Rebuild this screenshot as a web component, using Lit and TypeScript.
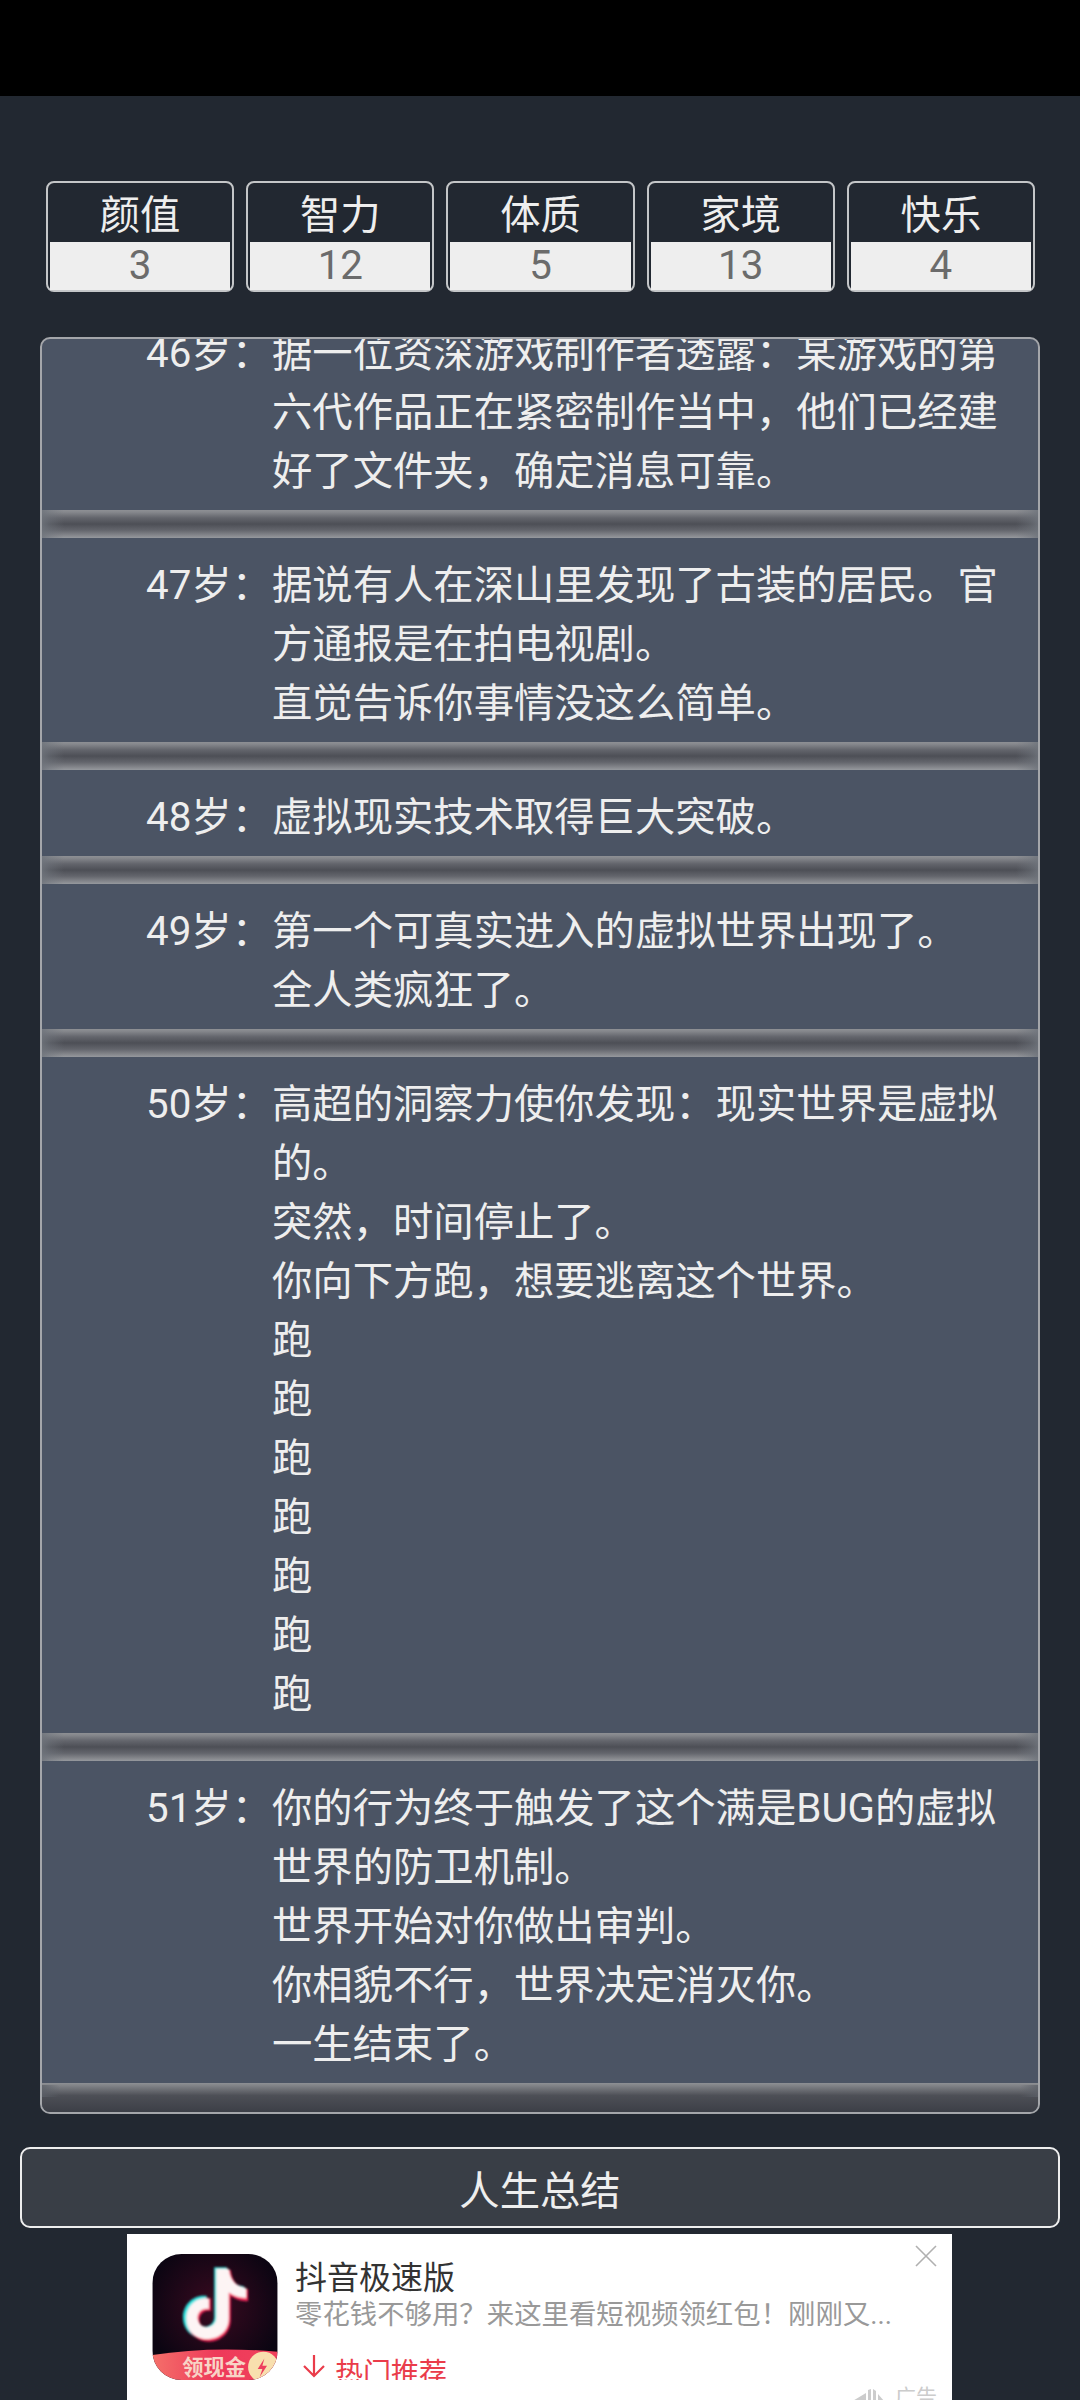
import { LitElement, html, css, svg } from 'lit';
import { customElement } from 'lit/decorators.js';

const stats = [
  ['颜值', '3'],
  ['智力', '12'],
  ['体质', '5'],
  ['家境', '13'],
  ['快乐', '4'],
];

const rows: [number, string[]][] = [
  [46, ['据一位资深游戏制作者透露：某游戏的第六代作品正在紧密制作当中，他们已经建好了文件夹，确定消息可靠。']],
  [47, ['据说有人在深山里发现了古装的居民。官方通报是在拍电视剧。', '直觉告诉你事情没这么简单。']],
  [48, ['虚拟现实技术取得巨大突破。']],
  [49, ['第一个可真实进入的虚拟世界出现了。', '全人类疯狂了。']],
  [50, ['高超的洞察力使你发现：现实世界是虚拟的。', '突然，时间停止了。', '你向下方跑，想要逃离这个世界。', '跑', '跑', '跑', '跑', '跑', '跑', '跑']],
  [51, ['你的行为终于触发了这个满是BUG的虚拟世界的防卫机制。', '世界开始对你做出审判。', '你相貌不行，世界决定消灭你。', '一生结束了。']],
];

const appIcon = svg`
  <svg class="app-icon" viewBox="66 42 377 379">
    <defs>
      <radialGradient id="glow" cx="50%" cy="42%" r="55%">
        <stop offset="0" stop-color="#3a0a20" />
        <stop offset="1" stop-color="#0b0512" />
      </radialGradient>
      <linearGradient id="band" x1="0" x2="1" y1="0" y2="0">
        <stop offset="0" stop-color="#f4706a" />
        <stop offset="0.5" stop-color="#ee3a5a" />
        <stop offset="1" stop-color="#f0405c" />
      </linearGradient>
      <clipPath id="rounded"><rect x="66" y="42" width="377" height="379" rx="88" /></clipPath>
      <filter id="soft"><feGaussianBlur stdDeviation="2.5" /></filter>
    </defs>
    <g clip-path="url(#rounded)">
      <rect x="66" y="42" width="377" height="379" fill="url(#glow)" />
      <g filter="url(#soft)">
        <path d="M252 82h38c3 36 24 54 52 58v36c-20 0-38-6-52-16v72c0 38-30 66-66 66s-66-28-66-66 32-70 72-64v38c-18-5-34 8-34 26 0 16 13 28 28 28s28-12 28-28z" fill="#29e0dc" />
        <path d="M264 90h38c3 36 24 54 52 58v36c-20 0-38-6-52-16v72c0 38-30 66-66 66s-66-28-66-66 32-70 72-64v38c-18-5-34 8-34 26 0 16 13 28 28 28s28-12 28-28z" fill="#f0285a" />
        <path d="M258 86h38c3 36 24 54 52 58v30c-20 0-38-6-52-16v78c0 38-30 62-66 62s-62-26-62-62 28-66 68-60v32c-18-5-34 8-34 26 0 16 13 28 28 28s28-12 28-28z" fill="#fdf4f4" />
      </g>
      <path d="M66 346Q240 318 443 336V421H66z" fill="url(#band)" />
      <circle cx="400" cy="382" r="46" fill="#f8dfae" />
      <path d="M403 356l-20 32h14l-8 24 22-34h-14z" fill="#ee3e5e" />
      <text x="252" y="405" class="icon-label">领现金</text>
    </g>
  </svg>
`;

@customElement('app-root')
export class AppRoot extends LitElement {
  static styles = css`
    :host {
      display: flex;
      flex-direction: column;
      width: 1080px;
      height: 2400px;
      overflow: hidden;
      background: #222831;
      color: #eeeeee;
      font-family: Roboto, 'Noto Sans CJK SC', sans-serif;
      font-size: 40.33px;
    }
    .status {
      height: 96px;
      background: #000;
      flex: none;
    }
    .stats {
      display: flex;
      gap: 12px;
      margin: 85px 45px 0 46px;
      height: 111px;
    }
    .stat {
      flex: 1;
      display: flex;
      flex-direction: column;
      border: 2px solid #c4c6c8;
      border-radius: 8px;
      padding: 0 2px 2px;
      box-sizing: border-box;
    }
    .stat-name {
      height: 59px;
      box-sizing: border-box;
      padding-top: 6px;
      line-height: 53px;
      text-align: center;
    }
    .stat-value {
      flex: 1;
      line-height: 48px;
      text-align: center;
      background: #eeeeee;
      color: #6b6b6b;
    }
    .panel {
      margin: 45px 40px 0;
      height: 1777px;
      box-sizing: border-box;
      border: 2px solid #a4a6aa;
      border-radius: 10px;
      background: #4b5464;
      overflow: hidden;
      flex: none;
    }
    .list {
      margin-top: -33px;
    }
    .row {
      display: flex;
      padding: 18px 24px 9px 0;
      line-height: 59px;
    }
    .age {
      flex: none;
      width: 230px;
      text-align: right;
    }
    .text {
      flex: 1;
    }
    .sep {
      height: 28px;
      background:
        linear-gradient(to right, rgba(111, 116, 124, 0.85) 0, rgba(111, 116, 124, 0.45) 8px, transparent 22px, transparent calc(100% - 22px), rgba(111, 116, 124, 0.45) calc(100% - 8px), rgba(111, 116, 124, 0.85) 100%),
        linear-gradient(to bottom, #8e9094 0, #85878c 8%, #63656c 28%, #4d4f56 50%, #63656c 72%, #888a8f 92%, #96999e 100%);
    }
    .sep.last {
      height: 30px;
      background:
        linear-gradient(to right, rgba(92, 96, 104, 0.8) 0, transparent 18px, transparent calc(100% - 18px), rgba(92, 96, 104, 0.8) 100%) top 2px left 0 / 100% 12px no-repeat,
        linear-gradient(to bottom, #8e9094 0, #7c7e83 12%, #4d4f56 42%, #3b3e46 100%);
    }
    .summary {
      flex: none;
      box-sizing: border-box;
      margin: 33px 20px 0;
      height: 81px;
      border: 2px solid #eeeeee;
      border-radius: 10px;
      background: #393e46;
      color: #eeeeee;
      font: inherit;
      padding: 0;
    }
    .ad {
      flex: none;
      position: relative;
      box-sizing: border-box;
      width: 825px;
      height: 170px;
      margin: 6px 0 0 127px;
      background: #fff;
      display: flex;
      gap: 17px;
      padding: 20px 0 0 25px;
      overflow: hidden;
    }
    .app-icon {
      flex: none;
      width: 126px;
      height: 126px;
    }
    .icon-label {
      fill: #f8d4c6;
      font-size: 64px;
      font-weight: 700;
      text-anchor: middle;
    }
    .ad-body {
      height: 126px;
      overflow: hidden;
      min-width: 0;
    }
    .ad-title {
      color: #333;
      font-size: 32px;
      line-height: 40px;
      padding-top: 4px;
    }
    .ad-desc {
      color: #999;
      font-size: 27.4px;
      line-height: 34px;
      white-space: nowrap;
    }
    .ad-hot {
      display: flex;
      align-items: flex-start;
      gap: 9px;
      margin-top: 22px;
      color: #ea3c4a;
      font-size: 28px;
      line-height: 40px;
    }
    .ad-hot svg {
      width: 24px;
      height: 27px;
      margin-top: 1px;
      margin-left: 7px;
    }
    .close {
      position: absolute;
      top: 11px;
      right: 15px;
      width: 22px;
      height: 22px;
    }
    .ad-tag {
      position: absolute;
      right: 15px;
      bottom: -8px;
      display: flex;
      align-items: center;
      gap: 7px;
      color: #cccccc;
      font-size: 21px;
      line-height: 30px;
    }
    .ad-tag svg {
      width: 37px;
      height: 13px;
      margin-top: -3px;
    }
  `;

  render() {
    return html`
      <div class="status"></div>
      <div class="stats">
        ${stats.map(
          ([name, value]) => html`
            <div class="stat">
              <div class="stat-name">${name}</div>
              <div class="stat-value">${value}</div>
            </div>
          `
        )}
      </div>
      <div class="panel">
        <div class="list">
          ${rows.map(
            ([age, lines], i) => html`
              <div class="row">
                <div class="age">${age}岁：</div>
                <div class="text">${lines.map((l) => html`<div>${l}</div>`)}</div>
              </div>
              <div class="sep ${i === rows.length - 1 ? 'last' : ''}"></div>
            `
          )}
        </div>
      </div>
      <button class="summary">人生总结</button>
      <div class="ad">
        ${appIcon}
        <div class="ad-body">
          <div class="ad-title">抖音极速版</div>
          <div class="ad-desc">零花钱不够用？来这里看短视频领红包！刚刚又...</div>
          <div class="ad-hot">
            <svg viewBox="0 0 24 27" fill="none" stroke="#ea3c4a" stroke-width="2.2">
              <path d="M12 0V20M2 11l10 10 10-10M0 26H24" />
            </svg>
            热门推荐
          </div>
        </div>
        <svg class="close" viewBox="0 0 22 22" fill="none" stroke="#b0b0b0" stroke-width="1.6">
          <path d="M1 1L21 21M21 1L1 21" />
        </svg>
        <div class="ad-tag">
          <svg viewBox="0 0 37 13" fill="#cccccc">
            <path d="M0 13L15 4V13zM17 13V1L20 0V13zM22 0L25 2V13H22zM27 5L33 12V13H27zM34 11h3v2h-3z" />
          </svg>
          广告
        </div>
      </div>
    `;
  }
}
